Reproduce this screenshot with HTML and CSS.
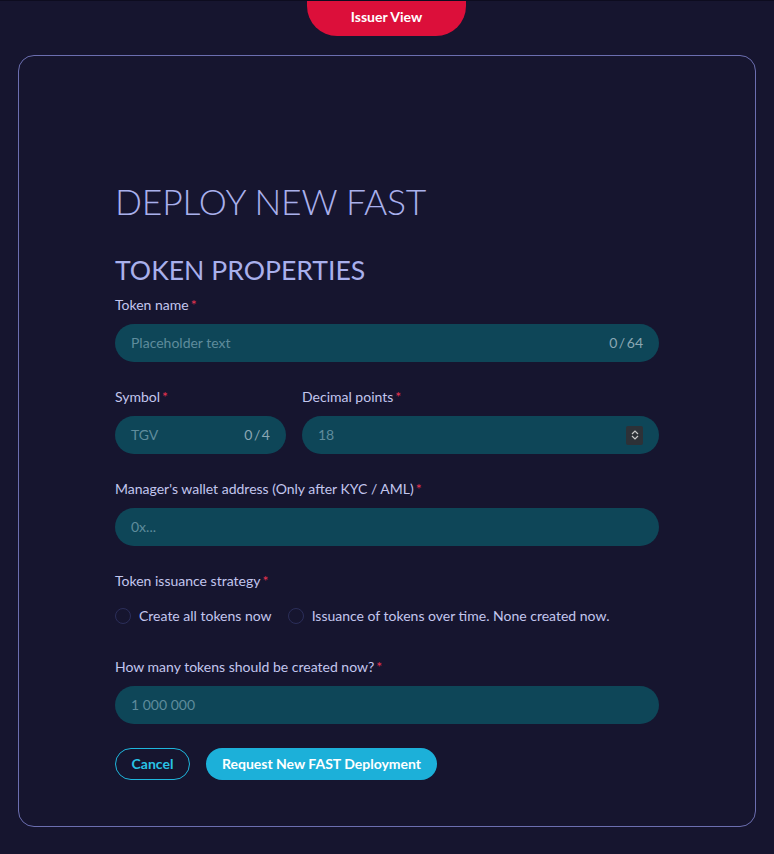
FILE: index.html
```html
<!DOCTYPE html>
<html>
    <head>
        <meta charset='utf-8'>
        <title>Deploy New FAST</title>
        <link rel="stylesheet" href="styles.css">
    </head>
    <body>
        <div class="top"><span class="tab">Issuer View</span></div>
        <div class="card">
            <h1>DEPLOY NEW FAST</h1>
            <h2>TOKEN PROPERTIES</h2>
            <div class="field first">
                <label>Token name<span class="req">*</span></label>
                <div class="input"><span class="ph">Placeholder text</span><span class="count">0 / 64</span></div>
            </div>
            <div class="row">
                <div class="field small">
                    <label>Symbol<span class="req">*</span></label>
                    <div class="input"><span class="ph">TGV</span><span class="count">0 / 4</span></div>
                </div>
                <div class="field grow">
                    <label>Decimal points<span class="req">*</span></label>
                    <div class="input"><span class="ph">18</span><span class="spin"><svg width="10" height="12" viewBox="0 0 10 12"><path d="M2 5 L5 2 L8 5 M2 7 L5 10 L8 7" fill="none" stroke="#c8c8c8" stroke-width="1.2"/></svg></span></div>
                </div>
            </div>
            <div class="field">
                <label>Manager's wallet address (Only after KYC / AML)<span class="req">*</span></label>
                <div class="input"><span class="ph">0x...</span></div>
            </div>
            <div class="field">
                <label>Token issuance strategy<span class="req">*</span></label>
                <div class="radios">
                    <span class="radio"><i></i>Create all tokens now</span>
                    <span class="radio"><i></i>Issuance of tokens over time. None created now.</span>
                </div>
            </div>
            <div class="field amount">
                <label>How many tokens should be created now?<span class="req">*</span></label>
                <div class="input"><span class="ph">1 000 000</span></div>
            </div>
            <div class="buttons">
                <button class="cancel">Cancel</button>
                <button class="submit">Request New FAST Deployment</button>
            </div>
        </div>
    </body>
</html>
```

FILE: styles.css
```css
body {
    margin: 0;
    background: #16152f;
    font: 14px/1.4 Lato, sans-serif;
    color: #c3c6ee;
    border-top: 1px solid #0d0c1f;
}
.top {
    display: flex;
    justify-content: center;
    height: 36px;
    margin-top: -1px;
}
.tab {
    width: 159px;
    height: 36px;
    margin-right: 1px;
    background: #dc0f3a;
    color: #fff;
    font-weight: bold;
    font-size: 14px;
    text-align: center;
    line-height: 34px;
    border-radius: 0 0 30px 30px;
}
.card {
    margin: 19px 18px 0 18px;
    height: 772px;
    box-sizing: border-box;
    border: 1px solid #6b6eb0;
    border-radius: 16px;
    padding: 124px 96px 0 96px;
}
h1 {
    margin: 0;
    font: 300 35.5px/44px Lato, sans-serif;
    color: #a9b0ec;
    letter-spacing: -0.2px;
}
h2 {
    margin: 30px 0 0 0;
    font: 400 26.6px/32px Lato, sans-serif;
    color: #a9b0ec;
}
.field {
    width: 544px;
}
.field + .field, .row + .field, .field + .row {
    margin-top: 25px;
}
.field.first {
    margin-top: 9px;
}
.field.amount {
    margin-top: 31px;
}
label {
    display: block;
    font-size: 14px;
    line-height: 20px;
    margin-bottom: 9px;
}
.req {
    color: #e8334f;
    margin-left: 2px;
}
.input {
    display: flex;
    align-items: center;
    height: 38px;
    padding: 0 16px;
    background: #0e4658;
    border-radius: 19px;
    color: #5f8c9c;
    font-size: 14px;
}
.ph {
    flex: 1;
}
.count {
    color: #8ba7b3;
    font-size: 14px;
    word-spacing: -2px;
}
.spin {
    display: flex;
    align-items: center;
    justify-content: center;
    width: 17px;
    height: 19px;
    background: #2d3137;
    border-radius: 2px;
}
.row {
    display: flex;
    gap: 16px;
    width: 544px;
}
.row .field {
    margin-top: 0;
}
.small {
    width: 171px;
}
.grow {
    flex: 1;
}
.radios {
    display: flex;
    gap: 16px;
    margin-top: 15px;
}
.radio {
    display: flex;
    align-items: center;
    gap: 8px;
    font-size: 14px;
}
.radio i {
    display: inline-block;
    width: 14px;
    height: 14px;
    border: 1px solid #2b2e5a;
    border-radius: 50%;
}
.buttons {
    display: flex;
    gap: 16px;
    margin-top: 24px;
}
button {
    height: 32px;
    border-radius: 16px;
    font: bold 14px Lato, sans-serif;
}
.cancel {
    width: 75px;
    background: transparent;
    border: 1px solid #1fb6dc;
    color: #29c3e6;
}
.submit {
    width: 231px;
    background: #1cb0d9;
    border: none;
    color: #fff;
}
```
